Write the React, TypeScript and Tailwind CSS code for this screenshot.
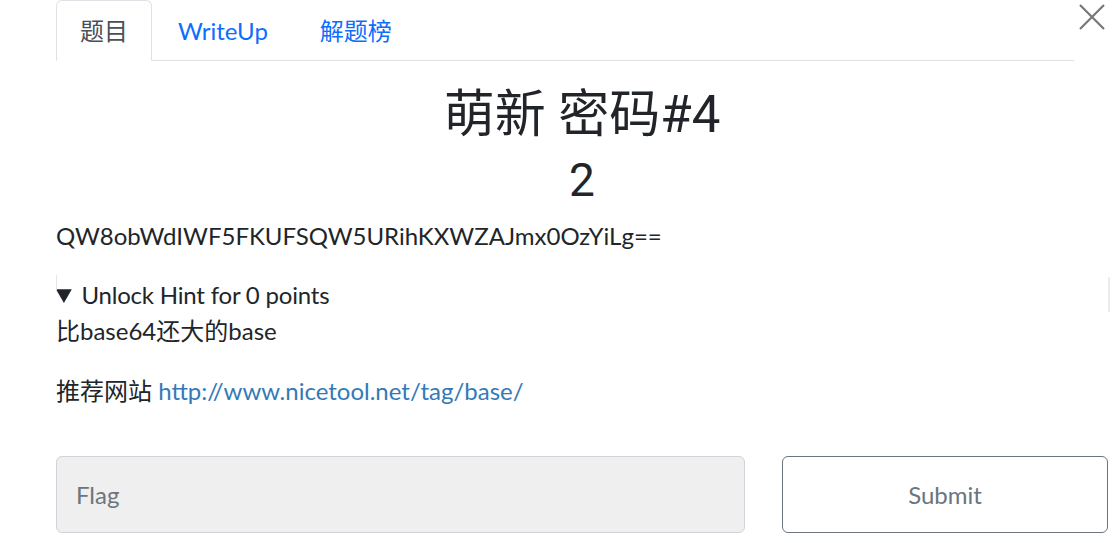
export default function App() {
  const tabs = [
    { label: "题目", active: true },
    { label: "WriteUp", active: false },
    { label: "解题榜", active: false },
  ];

  return (
    <div
      className="relative h-[543px] w-[1119px] overflow-hidden bg-white pl-[56px] pr-[11px] text-[#212529]"
      style={{ fontFamily: 'Lato, "Noto Sans CJK SC", sans-serif' }}
    >
      {/* header: tabs + close */}
      <div className="flex items-start">
        <ul className="flex h-[61px] w-[1018px] border-b border-[#dee2e6]">
          {tabs.map((tab) => (
            <li key={tab.label}>
              <a
                className={
                  tab.active
                    ? "-mb-px flex h-[61px] items-center rounded-t-[6px] border border-b-white border-[#dee2e6] bg-white px-[23px] text-[24px] text-[#495057]"
                    : "flex h-[61px] items-center border border-transparent px-[25px] text-[24px] text-[#0d6efd]"
                }
              >
                {tab.label}
              </a>
            </li>
          ))}
        </ul>
        <button className="ml-[5px] mt-[4px] flex h-[26px] w-[26px] items-center justify-center text-[#777]">
          <svg width="26" height="26" viewBox="0 0 26 26" fill="none" stroke="currentColor" strokeWidth="2.2">
            <path d="M1 1 L25 25 M25 1 L1 25" />
          </svg>
        </button>
      </div>

      {/* challenge body */}
      <div className="w-[1052px]">
        <div style={{ fontFamily: 'Roboto, "Noto Sans CJK SC", sans-serif' }}>
          <h2 className="mt-[24px] text-center text-[51px] leading-[60px]">萌新 密码#4</h2>
          <h3 className="mt-[10px] text-center text-[46px] leading-[50px]">2</h3>
        </div>

        <p className="mt-[13px] text-[24px] leading-[36px]">QW8obWdIWF5FKUFSQW5URihKXWZAJmx0OzYiLg==</p>

        <details open className="mt-[23px]">
          <summary className="text-[24px] leading-[36px] tracking-[-0.2px]">Unlock Hint for 0 points</summary>
          <p className="text-[24px] leading-[36px]">比base64还大的base</p>
        </details>
        <p className="mt-[24px] text-[24px] leading-[36px]">
          推荐网站 <a className="text-[#337ab7]">http://www.nicetool.net/tag/base/</a>
        </p>

        <div className="mt-[47px] flex gap-[37px]">
          <input
            placeholder="Flag"
            className="h-[77px] w-[689px] rounded-[6px] border border-[#ced4da] bg-[#efefef] px-[19px] text-[24px] placeholder:text-[#6c757d]"
          />
          <button className="h-[77px] flex-1 rounded-[6px] border border-[#6c757d] text-[24px] text-[#6c757d]">
            Submit
          </button>
        </div>
      </div>

      <div className="absolute left-[56px] top-[275px] h-[15px] w-px bg-[#e5e5e5]" />
      <div className="absolute left-[1108px] top-[277px] h-[35px] w-[2px] bg-[#ececec]" />
    </div>
  );
}
